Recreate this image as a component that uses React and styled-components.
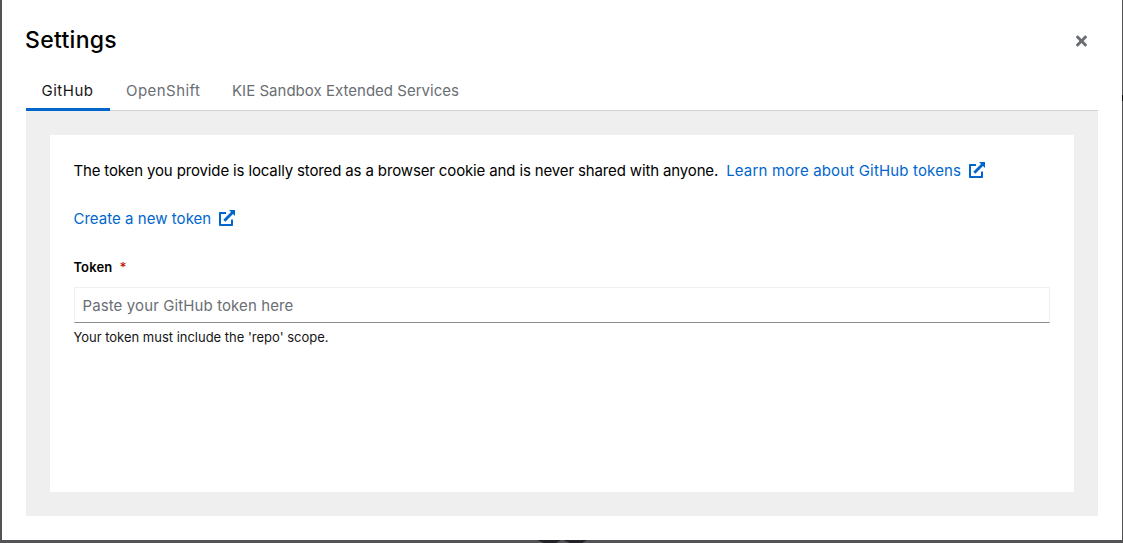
import React from "react";
import styled, { createGlobalStyle } from "styled-components";

const Global = createGlobalStyle`
  * { box-sizing: border-box; }
  html, body { margin: 0; height: 100%; overflow: hidden; }
  body { background: #535355; font-family: Inter, "Liberation Sans", sans-serif; font-size: 15px; color: #151515; }
  #root { height: 100%; }
`;
const Backdrop = styled.div`
  position: relative;
  height: 543px;
  padding: 0 1px 3px 2px;
`;
const Modal = styled.section`
  height: 540px;
  padding: 24px;
  background: #fff;
  display: flex;
  flex-direction: column;
`;
const Shade = styled.svg`
  position: absolute;
  left: 536px;
  bottom: 0;
`;
const EdgeMark = styled.span`
  position: absolute;
  right: 0;
  top: 95px;
  width: 1px;
  height: 6px;
  background: #0a0a0a;
`;
const Header = styled.header`
  height: 46px;
  display: flex;
  justify-content: space-between;
  align-items: flex-start;
`;
const Title = styled.h1`
  margin: 0 0 0 -1px;
  font-size: 23px;
  line-height: 32px;
  font-weight: 500;
  color: #000;
  letter-spacing: 0.3px;
`;
const CloseButton = styled.button`
  border: 0;
  background: none;
  padding: 9px 11px 9px 10px;
  line-height: 0;
  color: #6a6e73;
`;
const Tabs = styled.nav`
  display: flex;
  height: 41px;
  border-bottom: 1px solid #d2d2d2;
`;
const Tab = styled.button`
  flex: none;
  width: ${(p) => p.$width}px;
  height: 41px;
  border: 0;
  border-bottom: 3px solid ${(p) => (p.$active ? "#06c" : "transparent")};
  background: none;
  padding: 3px 0 0 ${(p) => (p.$active ? 15.5 : 16)}px;
  font: inherit;
  line-height: 35px;
  text-align: left;
  white-space: nowrap;
  letter-spacing: ${(p) => p.$track}px;
  color: ${(p) => (p.$active ? "#151515" : "#6a6e73")};
`;
const Panel = styled.div`
  flex: 1;
  padding: 24px;
  background: #efefef;
`;
const Card = styled.div`
  height: 357px;
  padding: 24px;
  background: #fff;
`;
const Line = styled.p`
  margin: 0 0 24px -0.6px;
  height: 24px;
  line-height: 24px;
  display: flex;
  align-items: center;
  gap: 8px;
  white-space: nowrap;
  color: #000;
`;
const Text = styled.span`
  letter-spacing: ${(p) => p.$track}px;
`;
const Link = styled.a`
  display: flex;
  align-items: center;
  gap: 8px;
  color: #06c;
`;
const Glyph = styled.svg`
  display: block;
  margin-bottom: 2px;
`;
const Label = styled.label`
  display: block;
  height: 24px;
  margin: 0 0 8px -0.6px;
  padding-top: 2px;
  font-size: 13px;
  font-weight: 600;
  line-height: 21px;
  letter-spacing: 0.15px;
  color: #000;
`;
const Required = styled.span`
  margin-left: 7px;
  color: #c9190b;
`;
const Input = styled.input`
  display: block;
  width: 100%;
  height: 36px;
  padding: 1px 7.5px 0;
  border: 1px solid #f0f0f0;
  border-bottom-color: #8a8d90;
  border-radius: 0;
  outline: 0;
  font: inherit;
  letter-spacing: 0.11px;
  &::placeholder { color: #6a6e73; opacity: 1; }
`;
const Helper = styled.div`
  margin: 4px 0 0 -0.6px;
  font-size: 13px;
  line-height: 21px;
  letter-spacing: -0.01px;
`;

const CloseIcon = () => (
  <svg width="11" height="16" viewBox="0 0 352 512" fill="currentColor">
    <path d="M242.72 256l100.07-100.07c12.28-12.28 12.28-32.19 0-44.48l-22.24-22.24c-12.28-12.28-32.19-12.28-44.48 0L176 189.28 75.93 89.21c-12.28-12.28-32.19-12.28-44.48 0L9.21 111.45c-12.28 12.28-12.28 32.19 0 44.48L109.28 256 9.21 356.07c-12.28 12.28-12.28 32.19 0 44.48l22.24 22.24c12.28 12.28 32.2 12.28 44.48 0L176 322.72l100.07 100.07c12.28 12.28 32.2 12.28 44.48 0l22.24-22.24c12.28-12.28 12.28-32.19 0-44.48L242.72 256z" />
  </svg>
);
const ExternalIcon = () => (
  <Glyph width="16" height="16" viewBox="0 0 16 16" fill="currentColor">
    <path d="M.8 2H7v2H2v10h10V9.500h2v5.700a.8.8 0 0 1-.8.8H.8a.8.8 0 0 1-.8-.8V2.800A.8.8 0 0 1 .8 2z" />
    <path d="M10 0h6v6l-2-2-7.700 7.700-2-2L12 2z" />
  </Glyph>
);

export default function App() {
  return (
    <>
      <Global />
      <Backdrop>
        <Modal>
          <Header>
            <Title>Settings</Title>
            <CloseButton aria-label="Close"><CloseIcon /></CloseButton>
          </Header>
          <Tabs>
            <Tab $active $width={84} $track={0.5}>GitHub</Tab>
            <Tab $width={106} $track={0.45}>OpenShift</Tab>
            <Tab $width={260} $track={0.02}>KIE Sandbox Extended Services</Tab>
          </Tabs>
          <Panel>
            <Card>
              <Line>
                <Text $track={-0.138}>The token you provide is locally stored as a browser cookie and is never shared with anyone.</Text>
                <Link><Text $track={0.16}>Learn more about GitHub tokens</Text><ExternalIcon /></Link>
              </Line>
              <Line>
                <Link><Text $track={0.04}>Create a new token</Text><ExternalIcon /></Link>
              </Line>
              <Label>Token<Required>*</Required></Label>
              <Input placeholder="Paste your GitHub token here" />
              <Helper>Your token must include the 'repo' scope.</Helper>
            </Card>
          </Panel>
        </Modal>
        <Shade width="52" height="3" viewBox="0 0 52 3" fill="#232327">
          <path d="M1 0H25L20 3H8zM27 0H51L46 3H34z" />
        </Shade>
        <EdgeMark />
      </Backdrop>
    </>
  );
}
